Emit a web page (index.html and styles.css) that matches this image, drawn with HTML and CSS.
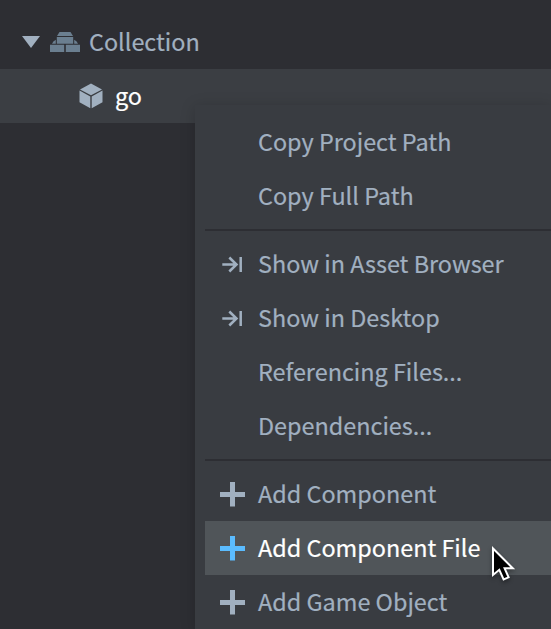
FILE: index.html
```html
<!DOCTYPE html>
<html lang="en">
<head>
<meta charset="utf-8">
<title>Outline</title>
<link rel="stylesheet" href="styles.css">
</head>
<body>
<svg class="defs" width="0" height="0">
  <symbol id="reveal" viewBox="0 0 26 26"><path d="M2.3 13.5H16.5M9.3 6.5L16.5 13.5L9.3 20.5M20.7 6V21" fill="none" stroke="currentColor" stroke-width="2.5"/></symbol>
  <symbol id="plus" viewBox="0 0 26 26"><path d="M10 1H15V11H25V16H15V25.5H10V16H0V11H10Z" fill="currentColor"/></symbol>
</svg>
<main class="outline">
  <div class="node">
    <svg class="arrow" width="18" height="12" viewBox="0 0 18 12"><path d="M0 0H18L9 12Z" fill="currentColor"/></svg>
    <svg class="bricks" width="30" height="20" viewBox="0 0 30 20"><path d="M9.5 0H20.5L23 4H7ZM6.8 5H23.2V11.7H6.8ZM5.8 7.7V11.7H2Q2.8 9 5.8 7.7ZM24.2 7.7V11.7H28Q27.2 9 24.2 7.7ZM0 12.8H14.2V20H0ZM15.8 12.8H30V20H15.8Z" fill="currentColor"/></svg>
    <span class="label">Collection</span>
  </div>
  <div class="node selected">
    <svg class="cube" width="24" height="26" viewBox="0 0 24 26"><path d="M12 .5L23 6.4L12 12.2L1 6.4ZM.5 7.6L11.3 13.4V25.2L.5 19.3ZM23.5 7.6L12.7 13.4V25.2L23.5 19.3Z" fill="currentColor"/></svg>
    <span class="label">go</span>
  </div>
</main>
<nav class="menu">
  <div class="item"><span class="label">Copy Project Path</span></div>
  <div class="item"><span class="label">Copy Full Path</span></div>
  <div class="separator"></div>
  <div class="item"><svg class="icon"><use href="#reveal"/></svg><span class="label">Show in Asset Browser</span></div>
  <div class="item"><svg class="icon"><use href="#reveal"/></svg><span class="label">Show in Desktop</span></div>
  <div class="item"><span class="label">Referencing Files...</span></div>
  <div class="item"><span class="label">Dependencies...</span></div>
  <div class="separator"></div>
  <div class="item"><svg class="icon"><use href="#plus"/></svg><span class="label">Add Component</span></div>
  <div class="item active"><svg class="icon"><use href="#plus"/></svg><span class="label">Add Component File</span></div>
  <div class="item"><svg class="icon"><use href="#plus"/></svg><span class="label">Add Game Object</span></div>
</nav>
<svg class="pointer" width="28" height="40" viewBox="0 0 28 40"><path d="M3 4.5V31L9.3 25.8L13.6 35.5L18.6 33.3L14.6 24.3H22.8Z" fill="#000" stroke="#fff" stroke-width="2"/></svg>
</body>
</html>
```
FILE: styles.css
```css
body {
  margin: 0;
  height: 629px;
  overflow: hidden;
  position: relative;
  background: #2d2e33;
  color: #a1b0c0;
  font: 23.4px/52px "Noto Sans CJK SC", "Noto Sans", sans-serif;
}

.defs {
  position: absolute;
}

.outline {
  padding-top: 15px;
}

.node {
  display: flex;
  align-items: center;
  height: 54px;
  padding-left: 22px;
}

.bricks {
  margin: 0 9px 0 10px;
  color: #6b7f90;
}

.selected {
  padding-left: 79px;
  background: #3b3e43;
}

.selected .label {
  margin-left: 12px;
  color: #fff;
}

.menu {
  position: absolute;
  top: 105px;
  left: 195px;
  right: 0;
  bottom: 0;
  padding: 10px 0 0 10px;
  box-sizing: border-box;
  background: #393c41;
  box-shadow: 0 2px 14px rgba(0, 0, 0, 0.18);
}

.item {
  display: grid;
  grid-template-columns: 38px 1fr;
  align-items: center;
  height: 54px;
  padding-left: 15px;
}

.item .label {
  grid-column: 2;
}

.label {
  padding-bottom: 2px;
  white-space: nowrap;
  -webkit-text-stroke: 0.2px currentColor;
}

.icon {
  width: 26px;
  height: 26px;
}

.separator {
  height: 2px;
  margin: 6px 0;
  background: #2d2e33;
}

.active {
  background: #505559;
  color: #fff;
}

.active .icon {
  color: #5bbcff;
}

.pointer {
  position: absolute;
  left: 490px;
  top: 544px;
  filter: drop-shadow(0 2px 2px rgba(0, 0, 0, 0.4));
}
```
